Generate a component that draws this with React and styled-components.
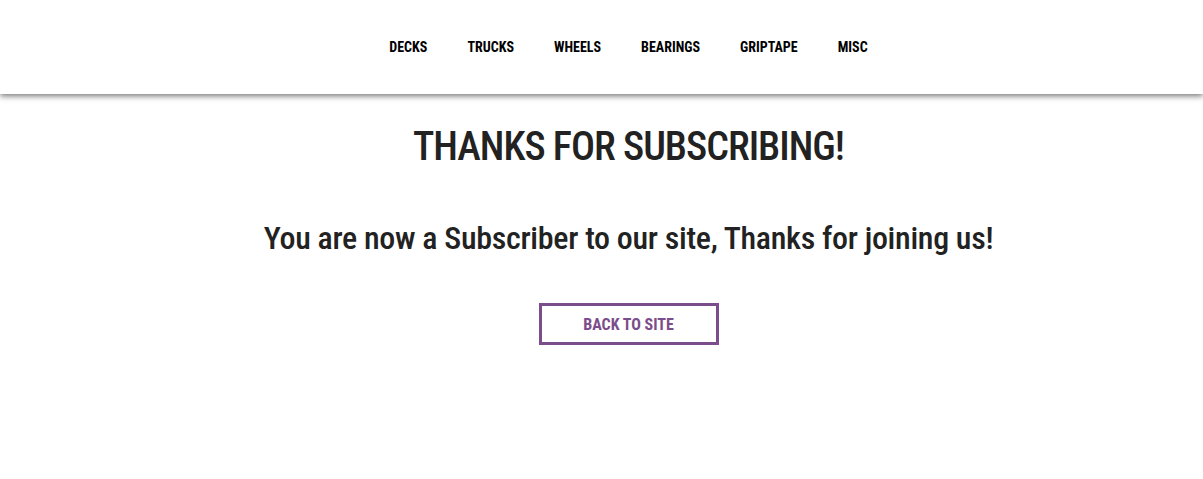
import React from "react";
import styled, { createGlobalStyle } from "styled-components";

const Global = createGlobalStyle`
  body {
    margin: 0;
    background: #fff;
    font-family: "Roboto Condensed", "Liberation Sans", sans-serif;
    color: #222;
  }
`;

const Header = styled.header`
  height: 94px;
  background: #fff;
  box-shadow: 0 2px 6px rgba(0, 0, 0, 0.55);
  display: flex;
  justify-content: center;
  align-items: flex-start;
  padding-left: 54px;
  box-sizing: border-box;
  position: relative;
  z-index: 2;
`;

const Nav = styled.nav`
  display: flex;
  gap: 40px;
  padding-top: 38px;
`;

const NavLink = styled.a`
  font-size: 14px;
  font-weight: 700;
  color: #000;
  text-decoration: none;
  line-height: 18px;
`;

const Main = styled.main`
  display: flex;
  flex-direction: column;
  align-items: center;
  padding-left: 54px;
  padding-top: 25px;
`;

const Title = styled.h1`
  margin: 0;
  font-size: 40px;
  font-weight: 500;
  letter-spacing: -1px;
  line-height: 56px;
  color: #222;
`;

const Subtitle = styled.h2`
  margin: 43px 0 0;
  font-size: 32px;
  font-weight: 500;
  letter-spacing: -0.3px;
  line-height: 40px;
  color: #222;
`;

const BackButton = styled.a`
  margin-top: 45px;
  width: 180px;
  height: 42px;
  box-sizing: border-box;
  border: 3px solid #7b4d8a;
  color: #7b4d8a;
  display: flex;
  align-items: center;
  justify-content: center;
  font-size: 16px;
  font-weight: 700;
  text-decoration: none;
`;

const links = ["DECKS", "TRUCKS", "WHEELS", "BEARINGS", "GRIPTAPE", "MISC"];

export default function App() {
  return (
    <>
      <Global />
      <Header>
        <Nav>
          {links.map((l) => (
            <NavLink key={l} href="#">{l}</NavLink>
          ))}
        </Nav>
      </Header>
      <Main>
        <Title>THANKS FOR SUBSCRIBING!</Title>
        <Subtitle>You are now a Subscriber to our site, Thanks for joining us!</Subtitle>
        <BackButton href="#">BACK TO SITE</BackButton>
      </Main>
    </>
  );
}
